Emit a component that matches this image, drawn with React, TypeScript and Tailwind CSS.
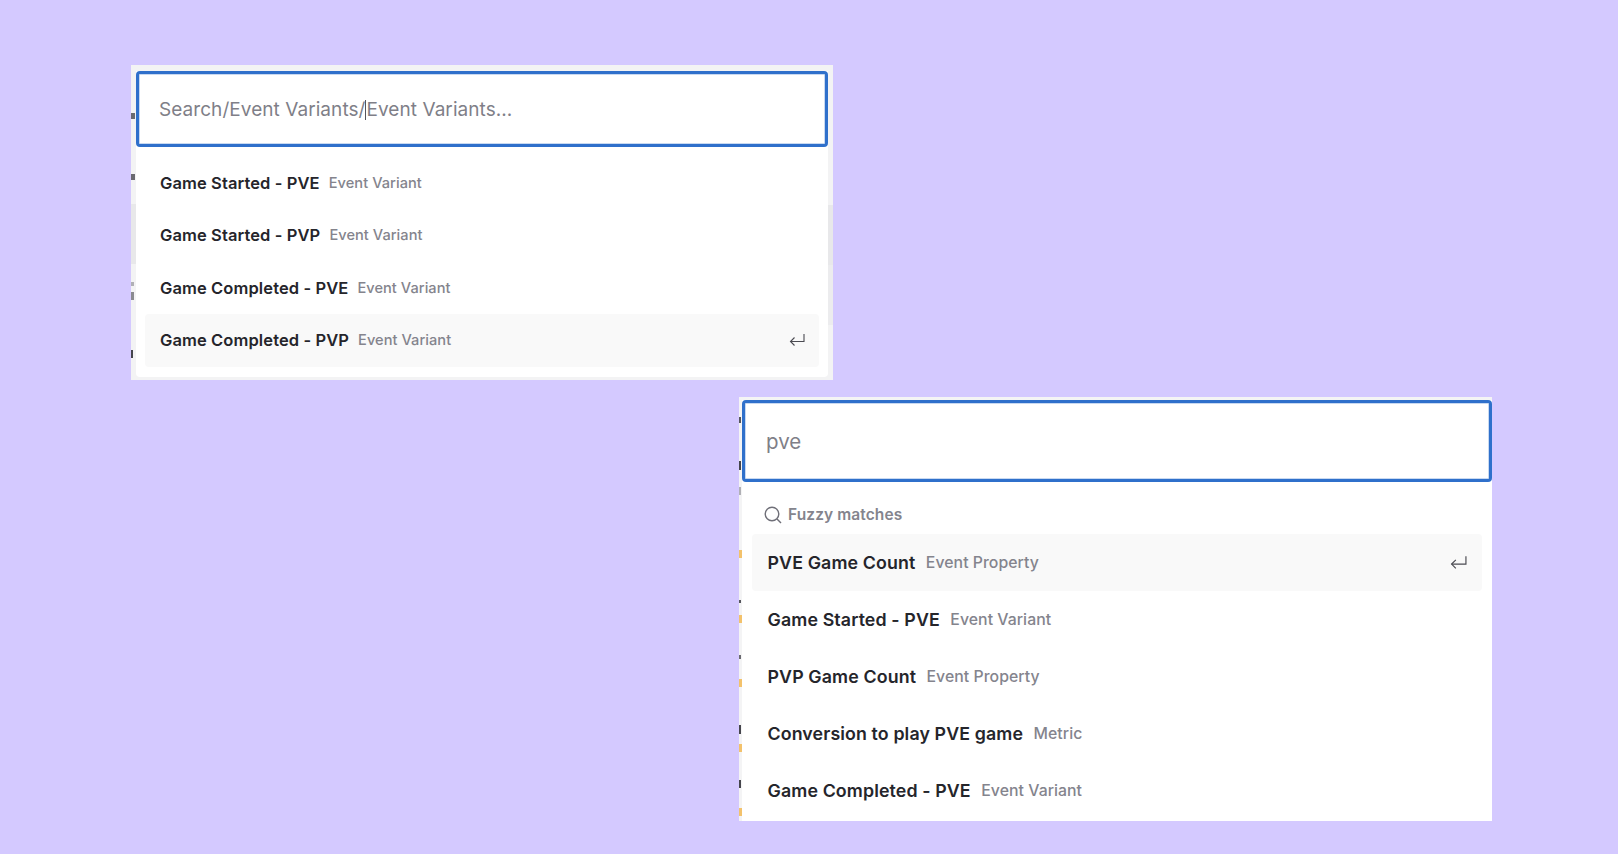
const firstRows = [
  { name: "Game Started - PVE", kind: "Event Variant" },
  { name: "Game Started - PVP", kind: "Event Variant" },
  { name: "Game Completed - PVE", kind: "Event Variant" },
  { name: "Game Completed - PVP", kind: "Event Variant", active: true },
];

const secondRows = [
  { name: "PVE Game Count", kind: "Event Property", active: true },
  { name: "Game Started - PVE", kind: "Event Variant" },
  { name: "PVP Game Count", kind: "Event Property" },
  { name: "Conversion to play PVE game", kind: "Metric" },
  { name: "Game Completed - PVE", kind: "Event Variant" },
];

// what is left of the page behind the second dropdown, top to bottom
const stripMarks = [
  "h-[6px] w-[2px] bg-[#55555c]",
  "mt-[38px] h-[9px] w-[2px] bg-[#45454c]",
  "mt-[17px] h-[8px] w-[2px] bg-[#b0b0b5]",
  "mt-[55px] h-[8px] bg-[#f3c26c]",
  "mt-[42px] h-[3px] w-[2px] bg-[#55555c]",
  "mt-[11.5px] h-[8px] bg-[#f3c26c]",
  "mt-[32.5px] h-[4px] w-[2px] bg-[#6a6a70]",
  "mt-[20px] h-[8px] bg-[#f3c26c]",
  "mt-[38px] h-[9px] w-[2px] bg-[#45454c]",
  "mt-[9.5px] h-[8px] bg-[#f3c26c]",
  "mt-[28.5px] h-[8px] w-[2px] bg-[#45454c]",
  "mt-[19.5px] h-[8px] bg-[#f3c26c]",
];

function EnterIcon({ className }: { className: string }) {
  return (
    <svg viewBox="0 0 16 14" fill="none" stroke="#4b4b52" strokeWidth="1.1" className={className}>
      <path d="M15 1v7.5H1.5" />
      <path d="M5.5 4.5l-4 4 4 4" />
    </svg>
  );
}

export default function App() {
  return (
    <div className="h-[854px] w-[1618px] overflow-hidden bg-[#d4c9ff] font-['Inter',sans-serif]">
      <div className="ml-[131px] mt-[65px] flex h-[315px] w-[702px] bg-[#f3f3f4]">
        {/* page behind the dropdown shows in this strip */}
        <div className="flex w-[5px] flex-col pt-[48px]">
          <span className="h-[6px] w-[4px] bg-[#6a6a70]" />
          <span className="mt-[55px] h-[6px] w-[4px] bg-[#6a6a70]" />
          <span className="mt-[24px] h-[60px] bg-[#e8e8ea]" />
          <span className="mt-[18px] h-[4px] w-[3px] bg-[#b0b0b5]" />
          <span className="mt-[6px] h-[8px] w-[3px] bg-[#8a8a90]" />
          <span className="mt-[50px] h-[8px] w-[2px] bg-[#45454c]" />
        </div>
        <div className="w-[692px] pt-[6px]">
          <div className="h-[306px] rounded-b-[4px] bg-white">
            <div className="flex h-[76px] items-center rounded-[4px] border-[3px] border-[#2f70cb] bg-white pl-[20px] pt-[2px] text-[19px] tracking-[0.06px] text-[#7f7f88] shadow-[inset_0_0_0_1px_#2f70cb44]">
              <span>Search/Event Variants/</span>
              <span className="h-[20px] w-px bg-[#55555c]" />
              <span>Event Variants...</span>
            </div>
            <div className="px-[9px] pt-[9.5px]">
              {firstRows.map((row) => (
                <div
                  key={row.name}
                  className={`flex h-[52.5px] items-center rounded-[4px] pl-[15px] pr-[14px] ${row.active ? "bg-[#f9f9f9]" : ""}`}
                >
                  <span className="pt-[1px] text-[16.5px] font-semibold tracking-[0.1px] text-[#25252b]">{row.name}</span>
                  <span className="ml-[9px] pt-[2px] text-[14.6px] font-medium tracking-[0.05px] text-[#84848d]">{row.kind}</span>
                  {row.active && <EnterIcon className="ml-auto h-[14px] w-[16px]" />}
                </div>
              ))}
            </div>
          </div>
        </div>
        <div className="flex w-[5px] flex-col pt-[140px]">
          <span className="h-[60px] bg-[#e8e8ea]" />
          <span className="h-[60px] bg-[#ececee]" />
        </div>
      </div>

      <div className="ml-[739px] mt-[17px] flex h-[424px] w-[753px] bg-[#f4f4f5]">
        {/* page behind the dropdown shows in this strip */}
        <div className="flex w-[3px] flex-col pt-[20px]">
          {stripMarks.map((mark, i) => (
            <span key={i} className={mark} />
          ))}
        </div>
        <div className="flex-1 pt-[3px]">
          <div className="h-[421px] bg-white">
            <div className="flex h-[82px] items-center rounded-[4px] border-[3px] border-[#2f70cb] bg-white pl-[21px] pt-[2px] text-[20.5px] text-[#7f7f88] shadow-[inset_0_0_0_1px_#2f70cb44]">
              pve
            </div>
            <div className="flex h-[52px] items-center pl-[22px] pt-[14px] text-[15.5px] font-semibold tracking-[0.1px] text-[#84848d]">
              <svg viewBox="0 0 18 18" fill="none" stroke="#6f6f78" strokeWidth="1.4" className="mr-[6px] h-[18px] w-[18px]">
                <circle cx="8" cy="8" r="6.8" />
                <path d="M13 13l4 4" />
              </svg>
              Fuzzy matches
            </div>
            <div className="px-[10px]">
              {secondRows.map((row) => (
                <div
                  key={row.name}
                  className={`flex h-[57px] items-center rounded-[4px] pl-[15.5px] pr-[15px] ${row.active ? "bg-[#f9f9f9]" : ""}`}
                >
                  <span className="pt-[1px] text-[17.8px] font-semibold tracking-[0.12px] text-[#25252b]">{row.name}</span>
                  <span className="ml-[10.5px] pt-[1px] text-[15.8px] font-medium tracking-[0.05px] text-[#84848d]">{row.kind}</span>
                  {row.active && <EnterIcon className="ml-auto h-[15px] w-[17px]" />}
                </div>
              ))}
            </div>
          </div>
        </div>
      </div>
    </div>
  );
}
